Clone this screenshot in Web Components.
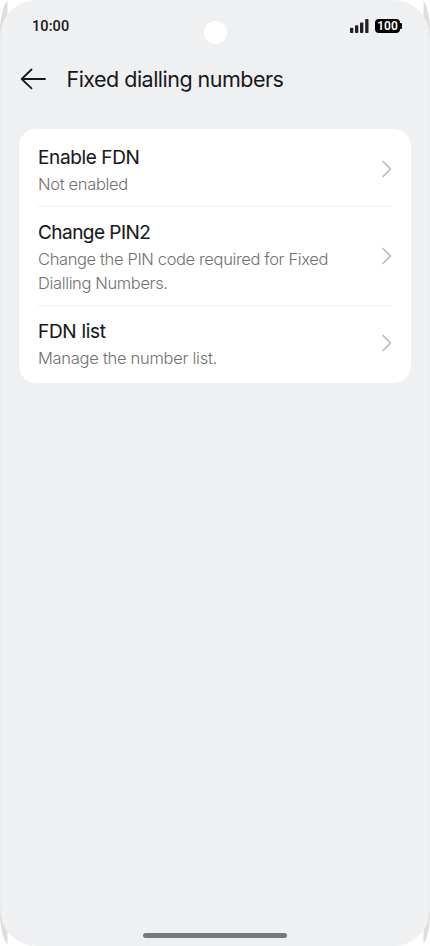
<!DOCTYPE html>
<html lang="en">
<head>
<meta charset="utf-8">
<title>Fixed dialling numbers</title>
<style>
html,body{margin:0;background:#fff}
body{font-family:Inter,"Liberation Sans",sans-serif;color:#17181a;overflow:hidden}
</style>
</head>
<body>
<phone-screen>
  <status-bar slot="status" time="10:00" battery="100"></status-bar>
  <page-header>Fixed dialling numbers</page-header>
  <settings-card>
    <settings-row label="Enable FDN" style="--h:77px;--top:16px;--chev:3px;--ls:-.38px;--ds:-.32px">Not enabled</settings-row>
    <settings-row label="Change PIN2" style="--h:98px;--top:13px;--chev:-1px;--ls:-.54px;--ds:-.37px">Change the PIN code required for Fixed<br>Dialling Numbers.</settings-row>
    <settings-row label="FDN list" style="--h:76px;--top:13px;--chev:-2px;--ls:-.3px;--ds:-.28px">Manage the number list.</settings-row>
  </settings-card>
</phone-screen>
<script>
const define = (name, html, setup) => {
  const template = document.createElement('template');
  template.innerHTML = html;
  customElements.define(name, class extends HTMLElement {
    constructor() {
      super();
      this.attachShadow({mode: 'open'}).append(template.content.cloneNode(true));
    }
    connectedCallback() { if (setup) setup(this, this.shadowRoot); }
  });
};

define('phone-screen', `
<style>
:host{display:block;position:relative;width:430px;height:946px;overflow:hidden}
.frame{position:absolute;inset:0}
.screen{position:relative;display:flex;flex-direction:column;box-sizing:border-box;width:430px;height:946px;border-radius:37px;background:linear-gradient(90deg,#ebecee 0,#f1f2f3 4px,#f1f2f3 7px,#eff0f2 8px,#eff0f2 423px,#f1f2f3 424px,#f1f2f3 427px,#ebecee 430px)}
.camera{position:absolute;left:204px;top:21px;width:23px;height:23px;border-radius:50%;background:#fff}
.home{width:144px;height:5px;border-radius:3px;background:#77787a;margin:auto auto 8px}
</style>
<svg class="frame" width="430" height="946" viewBox="0 0 430 946" fill="#dedede">
<path d="M7.500 0Q1 9 0 28V40H7.500ZM423.500 0Q429 9 430 28V40H423.500ZM7.500 945Q1 936 0 918V906H7.500ZM423.500 944Q429 936 430 918V906H423.500Z"/></svg>
<div class="screen"><slot name="status"></slot><slot></slot><div class="camera"></div><div class="home"></div></div>`);

define('status-bar', `
<style>
:host{display:flex;box-sizing:border-box;height:52px;padding:0 28.500px 0 32px;align-items:center;justify-content:space-between;font-family:Roboto,sans-serif}
.time{font-size:14.500px;font-weight:500;letter-spacing:.1px}
.right{display:flex;align-items:center;gap:6px}
.battery{display:flex;align-items:center}
.level{width:25px;height:14px;border-radius:4px;background:#000;color:#fff;font-size:12px;line-height:14px;font-weight:600;text-align:center}
.tip{width:1.500px;height:6px;background:#000;border-radius:0 1px 1px 0}
</style>
<span class="time"></span>
<div class="right">
<svg width="19" height="15" viewBox="0 0 19 15" fill="#202123"><rect y="8.800" width="3.300" height="5.200" rx=".8"/><rect x="5" y="6.300" width="3.300" height="7.700" rx=".8"/><rect x="10" y="3.500" width="3.300" height="10.500" rx=".8"/><rect x="15.200" y="0" width="3.300" height="14" rx=".8"/></svg>
<div class="battery"><span class="level"></span><i class="tip"></i></div>
</div>`, (host, root) => {
  root.querySelector('.time').textContent = host.getAttribute('time');
  root.querySelector('.level').textContent = host.getAttribute('battery');
});

define('page-header', `
<style>
:host{display:flex;align-items:center;height:54px;padding-left:20px;gap:19.500px;font-size:21.500px;line-height:28px;letter-spacing:-.52px}
svg{flex:none}
</style>
<svg width="27" height="24" viewBox="0 0 27 24" fill="none" stroke="#17181a" stroke-width="1.800" stroke-linecap="round" stroke-linejoin="round"><path d="M11.500 2.500L1.700 12L11.500 21.300M1.700 12H25"/></svg>
<span><slot></slot></span>`);

define('settings-card', `
<style>:host{display:block;margin:23px 19px 0;width:392px;height:253.500px;border-radius:17px;background:#fff;overflow:hidden}
::slotted(:not(:last-child)){border-bottom:1px solid #f1f1f2}
::slotted(*){margin:0 19px}</style><slot></slot>`);

define('settings-row', `
<style>
:host{display:flex;height:var(--h);align-items:flex-start;justify-content:space-between}
.label{font-size:19px;line-height:26px;letter-spacing:var(--ls);margin-top:var(--top);-webkit-text-stroke:.1px}
.desc{font-size:16.500px;line-height:24.500px;font-weight:300;letter-spacing:var(--ds);color:#717171;margin-top:.5px;white-space:nowrap}
svg{align-self:center;flex:none;margin-top:var(--chev)}
</style>
<div><div class="label"></div><div class="desc"><slot></slot></div></div>
<svg width="11" height="18" viewBox="0 0 11 18" fill="none" stroke="#bababb" stroke-width="1.700" stroke-linecap="round" stroke-linejoin="round"><path d="M2 1.500L9.500 9L2 16.500"/></svg>`, (host, root) => {
  root.querySelector('.label').textContent = host.getAttribute('label');
});
</script>
</body>
</html>
